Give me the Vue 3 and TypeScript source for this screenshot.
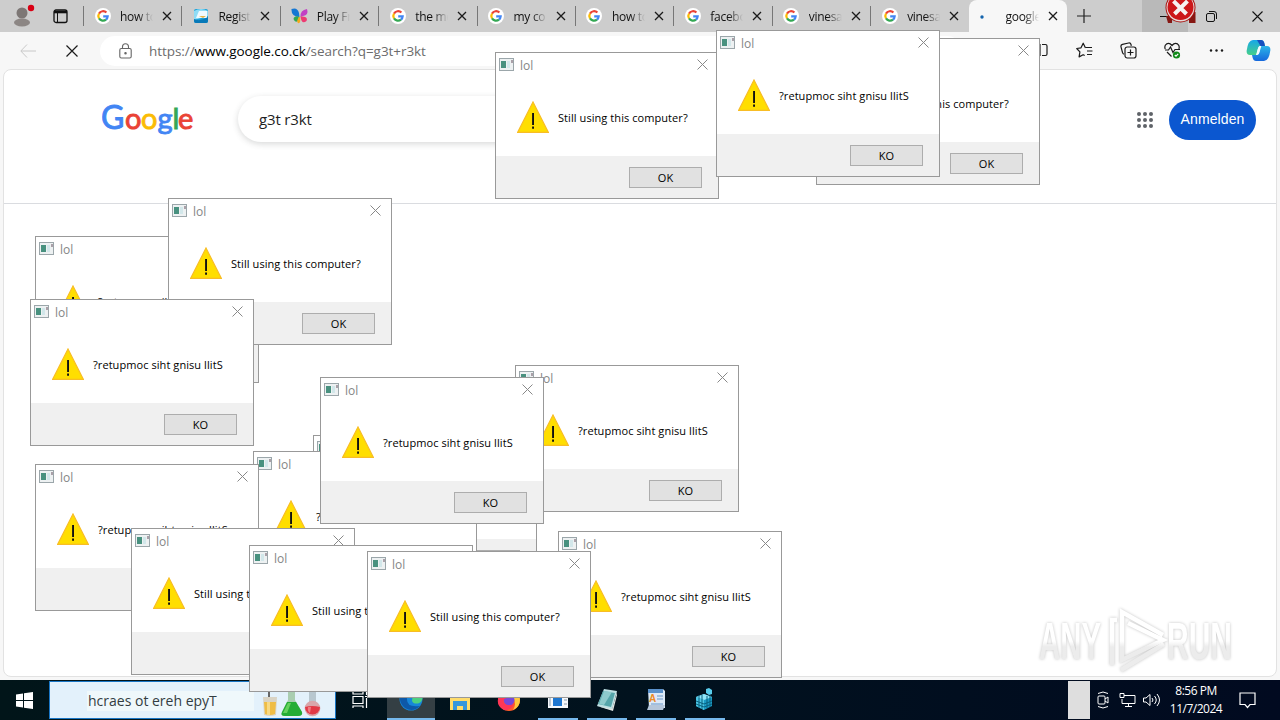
<template>
  <div class="desktop">
    <div class="browser">
      <div class="tab-bar">
        <div class="profile">
          <svg width="28" height="28" viewBox="0 0 28 28">
            <circle cx="13" cy="11" r="5.500" fill="#7d7775" />
            <ellipse cx="13" cy="20.500" rx="8" ry="4" fill="#8c8684" />
            <circle cx="22" cy="6" r="3.200" fill="#d90014" />
          </svg>
        </div>
        <svg class="workspaces" width="15" height="15" viewBox="0 0 15 15" fill="none" stroke="#111">
          <rect x="1" y="1" width="13" height="12.500" rx="2" stroke-width="1.300" />
          <path d="M1 3h13" stroke-width="2.600" />
          <path d="M4.500 3v10" />
        </svg>
        <div v-for="(tab, i) in tabs" :key="i" class="tab" :class="{ active: tab.icon === 'loading' }">
          <span class="favicon">
            <svg v-if="tab.icon === 'google'" width="16" height="16" viewBox="0 0 16 16">
              <circle cx="8" cy="8" r="8" fill="#fff" />
              <g fill="none" stroke-width="2.200">
                <path d="M11.400 4.500A4.700 4.700 0 0 0 4 5.600" stroke="#ea4335" />
                <path d="M4 5.600a4.700 4.700 0 0 0 0 4.800" stroke="#fbbc05" />
                <path d="M4 10.400a4.700 4.700 0 0 0 7 1.200" stroke="#34a853" />
                <path d="M11 11.600a4.600 4.600 0 0 0 1.700-3.300H8.200" stroke="#4285f4" />
              </g>
            </svg>
            <svg v-else-if="tab.icon === 'register'" width="16" height="16" viewBox="0 0 16 16">
              <rect x="1" y="1" width="14" height="14" rx="2" fill="#1ba0d8" />
              <path d="M1 3q7-4 14 0v5L1 12z" fill="#8fdcf5" />
              <path d="M6 3h8v7H3z" fill="#effaff" />
              <path d="M1 11q6 3 14-2v4q0 2-2 2H3q-2 0-2-2z" fill="#0879b8" />
              <path d="M6 8l7 0-3 2z" fill="#e3b44b" />
            </svg>
            <svg v-else-if="tab.icon === 'msn'" width="18" height="16" viewBox="0 0 18 16">
              <path d="M8.500 9Q0 9 .500 1q6-2 7.500 4z" fill="#1577d3" />
              <path d="M8 8.500q-5-1-5.500 2.500 1.500 4 4.500 2z" fill="#33a853" />
              <path d="M9.500 9Q9 2 16 1q2 6-4 7z" fill="#c23fc4" />
              <path d="M9.500 8.500q8-.500 6 4.500-5 4-6-4.500z" fill="#ed3b72" />
              <path d="M8 9q-3 4-1 6 3 1 2-6z" fill="#f8a81b" />
            </svg>
            <svg v-else width="16" height="16" viewBox="0 0 16 16"><circle cx="2" cy="9" r="1.700" fill="#1464ad" /></svg>
          </span>
          <span class="tab-title">{{ tab.title }}</span>
          <svg class="tab-close" width="10" height="10" viewBox="0 0 10 10"><path d="M1 1l8 8M9 1l-8 8" stroke="#1b1b1b" stroke-width="1.300" /></svg>
        </div>
        <svg class="new-tab" width="14" height="14" viewBox="0 0 14 14"><path d="M7 0v14M0 7h14" stroke="#222" stroke-width="1.200" /></svg>
        <div class="window-buttons">
          <span class="win-btn hover"><svg width="11" height="11" viewBox="0 0 11 11"><path d="M0 5.500h11" stroke="#111" /></svg></span>
          <span class="win-btn">
            <svg width="11" height="11" viewBox="0 0 11 11" fill="none" stroke="#111">
              <rect x=".500" y="2.500" width="8" height="8" rx="1.500" />
              <path d="M3 .500h5q2.500 0 2.500 2.500v5" />
            </svg>
          </span>
          <span class="win-btn"><svg width="11" height="11" viewBox="0 0 11 11"><path d="M.500.500l10 10M10.500.500l-10 10" stroke="#111" stroke-width="1.100" /></svg></span>
        </div>
      </div>

      <div class="toolbar">
        <svg class="back" width="16" height="14" viewBox="0 0 16 14" fill="none" stroke="#c8c8c8"><path d="M16 7H1M7 .500L.800 7 7 13.500" /></svg>
        <svg class="stop" width="12" height="12" viewBox="0 0 12 12"><path d="M.500.500l11 11M11.500.500l-11 11" stroke="#1b1b1b" stroke-width="1.200" /></svg>
        <div class="address">
          <svg width="13" height="16" viewBox="0 0 13 16" fill="none" stroke="#666" stroke-width="1.100">
            <rect x=".800" y="5.500" width="11.400" height="9.500" rx="1.500" />
            <path d="M3.500 5.500V3.800a3 3 0 0 1 6 0v1.700" />
            <circle cx="6.500" cy="10.200" r=".700" fill="#555" />
          </svg>
          <span class="url">https://<b>www.google.co.ck</b>/search?q=g3t+r3kt</span>
        </div>
        <div class="tools">
          <svg width="16" height="16" viewBox="0 0 16 16" fill="none" stroke="#1b1b1b" stroke-width="1.200"><path d="M7 2.500H3q-2 0-2 2v7q0 2 2 2h4zM9 2.500h3.500q1.500 0 1.500 1.500v8q0 1.500-1.500 1.500H9" /></svg>
          <svg width="17" height="17" viewBox="0 0 17 17" fill="none" stroke="#1b1b1b" stroke-width="1.200" stroke-linejoin="round"><path d="M9.500 6L7.200 1.200 5 5.800.700 6.500l3.200 3.400-.800 5 4-2.200 1.600.900M10 5.500h6M11 9h5.500M11 12.500h5" /></svg>
          <svg width="17" height="17" viewBox="0 0 17 17" fill="none" stroke="#1b1b1b" stroke-width="1.200"><rect x="5" y="5" width="11" height="11" rx="2.200" /><path d="M10.500 7.500v6M7.500 10.500h6M4 12.200Q2.800 12 2.500 10.500L1 4.800q-.400-2 1.500-2.500L8.600 1q1.900-.400 2.400 1.500l.300 1.300" /></svg>
          <svg width="17" height="17" viewBox="0 0 17 17" fill="none" stroke="#1b1b1b" stroke-width="1.200"><path d="M1.200 7Q0 3.500 2.600 1.900 5.500.500 8 3.500 10.500.500 13.500 1.900 16 3.500 14.900 7M1 8h3.500l2-3 2.500 5.500L11 7.500h5M3 10l4.500 4.500" /><circle cx="12.500" cy="13" r="3.600" fill="#118a19" stroke="none" /><path d="M10.800 13l1.200 1.200 2.200-2.400" stroke="#fff" /></svg>
          <svg width="17" height="17" viewBox="0 0 17 17" fill="#1b1b1b"><circle cx="3" cy="8.500" r="1.200" /><circle cx="8.500" cy="8.500" r="1.200" /><circle cx="14" cy="8.500" r="1.200" /></svg>
        </div>
        <svg class="copilot" width="25" height="23" viewBox="0 0 25 23">
          <defs>
            <linearGradient id="cp-a" x1="0" y1="0" x2="0" y2="1"><stop offset="0" stop-color="#17a7e8" /><stop offset="1" stop-color="#45cf8a" /></linearGradient>
            <linearGradient id="cp-b" x1="0" y1="0" x2="0" y2="1"><stop offset="0" stop-color="#2bb5e8" /><stop offset="1" stop-color="#1668dc" /></linearGradient>
          </defs>
          <path d="M7 1h8q2.500 0 3.300 3l.700 3h-4q-2.500 0-3.200 3L10.500 16H4Q.500 16 .600 12 2 1 7 1z" fill="url(#cp-a)" />
          <path d="M18 22h-8q-2.500 0-3.300-3L6 16h4q2.500 0 3.200-3L14.500 7H21q3.500 0 3.400 4Q23 22 18 22z" fill="url(#cp-b)" />
          <path d="M11 1h4q2.500 0 3.300 3l.700 3h-4.500z" fill="#164fbf" />
          <path d="M13.500 7h1.800l-2 7q-.700 2-2.500 2H10l1.800-6q.700-2.500 1.700-3z" fill="#f3fbff" />
        </svg>
      </div>

      <div class="page">
        <div class="search-head">
          <svg class="logo" width="94" height="36" viewBox="0 0 94 36">
            <text y="26" font-family="Lato, sans-serif" font-size="29" stroke-width=".900"><tspan x="-1" font-size="32" fill="#4285f4" stroke="#4285f4">G</tspan><tspan x="23" fill="#ea4335" stroke="#ea4335">o</tspan><tspan x="39" fill="#fbbc05" stroke="#fbbc05">o</tspan><tspan x="55.500" fill="#4285f4" stroke="#4285f4">g</tspan><tspan x="70.500" fill="#34a853" stroke="#34a853">l</tspan><tspan x="76" fill="#ea4335" stroke="#ea4335">e</tspan></text>
          </svg>
          <div class="search-box">g3t r3kt</div>
          <div class="account">
            <svg width="16" height="16" viewBox="0 0 16 16" fill="#5f6368">
              <circle v-for="n in 9" :key="n" :cx="2 + ((n - 1) % 3) * 6" :cy="2 + Math.floor((n - 1) / 3) * 6" r="2" />
            </svg>
            <span class="sign-in">Anmelden</span>
          </div>
        </div>
      </div>
    </div>

    <svg class="watermark" width="204" height="76" viewBox="0 0 204 76">
      <defs>
        <linearGradient id="wm" x1="0" y1="0" x2="0" y2="1"><stop offset=".500" stop-color="#fff" /><stop offset=".600" stop-color="#ececec" /></linearGradient>
        <linearGradient id="wm-mark" gradientUnits="userSpaceOnUse" x1="0" y1="8" x2="0" y2="68"><stop offset=".500" stop-color="#fff" /><stop offset=".600" stop-color="#ececec" /></linearGradient>
      </defs>
      <g fill="url(#wm)" font-family="Liberation Sans, sans-serif" font-size="52" font-weight="700">
        <text x="4" y="56" textLength="62" lengthAdjust="spacingAndGlyphs">ANY</text>
        <text x="132" y="56" textLength="65" lengthAdjust="spacingAndGlyphs">RUN</text>
      </g>
      <g fill="none" stroke="url(#wm-mark)" stroke-width="4.500">
        <path d="M82 17h-5v45" />
        <path d="M128 32L87 9v48l41-20L93 20" />
        <path d="M129 41L86 67" />
      </g>
    </svg>

    <div class="taskbar">
      <span class="start">
        <svg width="17" height="17" viewBox="0 0 17 17" fill="#fff"><path d="M0 2.400l7-1v6.700H0zM8 1.200L17 0v8.100H8zM0 9h7v6.600l-7-1zM8 9h9v8l-9-1.200z" /></svg>
      </span>
      <div class="search">
        <span class="search-text">hcraes ot ereh epyT</span>
        <svg width="70" height="36" viewBox="0 0 70 36">
          <path d="M3 15h14l-1 18q-6 2-12 0z" fill="#d9d3c4" /><path d="M4 20h12l-1 12q-5 2-10 0z" fill="#efbd45" /><path d="M7 20h3v13H7z" fill="#f8d983" /><path d="M9 7v8" stroke="#666" stroke-width="2" />
          <path d="M28 8h7v10l7 12q1 4-4 4H25q-5 0-3-4l6-12z" fill="#a9cdb0" /><path d="M27 20h9l6 10q1 4-4 4H25q-5 0-3-4z" fill="#25ad35" /><path d="M28 21h3l-4 10h-4z" fill="#65d15e" />
          <path d="M49 7h7v13h-7z" fill="#b8c7cf" /><circle cx="52.500" cy="26.500" r="7.800" fill="#d9a6ab" /><path d="M45 25q7-2 15 0a7.500 7.500 0 0 1-15 0" fill="#e23946" /><path d="M48 25h3l-1 6q-3-2-2-6" fill="#f17c83" />
        </svg>
      </div>
      <span class="task-view">
        <svg width="17" height="18" viewBox="0 0 17 18" fill="none" stroke="#fff" stroke-width="1.200"><path d="M1 1v2h10V1M1 5.500h10v7H1zM1 17v-2h10v2M14.500 0v4M14.500 7v10M13 5.500h4" /></svg>
      </span>
      <span v-for="app in apps" :key="app" class="app" :class="app">
        <svg width="24" height="24" viewBox="0 0 24 24">
          <g v-if="app === 'edge'"><circle cx="12" cy="12" r="11.500" fill="#1686d9" /><path d="M14 6q6-4 9.500 3 .500 6-4.500 7.500-5 .500-6-2.500z" fill="#4cd082" /><path d="M8 11q-1 10 13 8-7 7-15 2-6-5-5-12 5-3 7 2z" fill="#0d58a8" /></g>
          <g v-else-if="app === 'files'"><path d="M2 3h8l2 2h10v16H2z" fill="#f2b824" /><path d="M2 8h20v14H2z" fill="#ffdc6b" /><path d="M5 13h14v9h-4v-4H9v4H5z" fill="#3597dd" /></g>
          <g v-else-if="app === 'firefox'"><circle cx="12" cy="12" r="11" fill="#ff5b29" /><path d="M14 1q9 4 9 11 0 7-7 10 4-6 0-13z" fill="#ffc83c" /><circle cx="12" cy="12" r="5.500" fill="#7848d8" /><path d="M2 7q5-2 8 3-5 1-3 5 4 4 10 1-3 7-10 6-9-4-5-15z" fill="#ff3656" /></g>
          <g v-else-if="app === 'program'"><path d="M2 2h20v19H2z" fill="#f5f8fb" /><path d="M2 2h20v4H2z" fill="#8fa8bc" /><path d="M7 8h9v11H7z" fill="#1e77d0" /><path d="M4 8v11M18 9h3M18 13h3M18 17h3" stroke="#8a99a8" /></g>
          <g v-else-if="app === 'notepad'"><path d="M9 2l13 2-5 19-15-4z" fill="#bfe1e4" /><path d="M8 4l12 2-4 14-13-3z" fill="#55a5aa" /><path d="M9 4l8 1-8 13-5-1z" fill="#8ecacc" /><path d="M2 19l15 3 5-17v3l-4 16z" fill="#e2e6e4" /></g>
          <g v-else-if="app === 'wordpad'"><path d="M4 2h15l2 2v17H5z" fill="#dce9f7" /><path d="M4 2h15v4H4z" fill="#5a91cb" /><path d="M5 18h16l-2 5H3z" fill="#b5c6da" /><text x="5" y="15" font-family="Liberation Sans, sans-serif" font-size="10" font-weight="700" fill="#ed8a25">A</text><path d="M13 9h6M13 12h6M7 17h12" stroke="#6896c7" /></g>
          <g v-else><path d="M3 10l8-3 8 3v9l-8 4-8-4z" fill="#1b9ac4" /><path d="M3 10l8 3 8-3-8-3z" fill="#91e6fa" /><path d="M11 13v10l-8-4v-9z" fill="#4cc6e4" /><path d="M6 8v13M9 8v14M14 9v12M17 8v12M3 14l8 3 8-3M3 17l8 3 8-3" stroke="#08607f" fill="none" /><path d="M13 2l3-1 3 2v4l-3 1-3-2z" fill="#58ccec" /></g>
        </svg>
      </span>
      <span class="tray-gap"></span>
      <div class="tray">
        <svg width="12" height="18" viewBox="0 0 12 18" fill="none" stroke="#fff"><rect x="1" y="5" width="7" height="8" rx="1" /><path d="M8 8l3-2v6l-3-2M1 2.500q5-3 10 0M1 15.500q5 3 10 0" /></svg>
        <svg width="17" height="16" viewBox="0 0 17 16" fill="none" stroke="#fff"><path d="M5 3.500h11v8H3V7M9.500 11.500v3M6 14.500h7M1 1.500h4v4H1z" /></svg>
        <svg width="17" height="14" viewBox="0 0 17 14" fill="none" stroke="#fff"><path d="M.500 5v4H3l4 3.500v-11L3 5zM9 5q2 2 0 4M11.500 3q3.500 4 0 8M14 1q5 6 0 12" /></svg>
      </div>
      <div class="clock"><span>8:56 PM</span><span>11/7/2024</span></div>
      <svg class="notice" width="17" height="17" viewBox="0 0 17 17" fill="none" stroke="#fff" stroke-width="1.200"><path d="M1 1h15v11.500h-5L8.500 15.500 6 12.500H1z" /></svg>
    </div>

    <!-- message boxes, listed from bottom to top -->
    <div v-for="(box, i) in boxes" :key="'box' + i" class="msgbox" :style="{ left: box.x + 'px', top: box.y + 'px' }">
      <div class="msg-title">
        <svg width="15" height="13" viewBox="0 0 15 13">
          <rect x=".500" y=".500" width="14" height="12" fill="#edf1f2" stroke="#9ba6aa" />
          <rect x="2" y="3" width="5" height="7" fill="#48917f" />
          <path d="M8 3h3v7H8z" fill="#d2e7ea" /><path d="M12 2h2v3h-2z" fill="#aaa0a8" />
        </svg>
        <span>lol</span>
        <svg class="msg-close" width="11" height="11" viewBox="0 0 11 11"><path d="M.500.500l10 10M10.500.500l-10 10" stroke="#888" /></svg>
      </div>
      <div class="msg-body">
        <svg width="32" height="32" viewBox="0 0 32 32">
          <path d="M16 1L31.300 31.300H.700z" fill="#ffde00" stroke="#f8bd25" stroke-width="1.200" />
          <path d="M15.100 12h1.900v12h-1.900zM15.100 25.500h1.900v2.200h-1.900z" fill="#111" />
        </svg>
        <span>{{ box.flipped ? '?retupmoc siht gnisu llitS' : 'Still using this computer?' }}</span>
      </div>
      <div class="msg-foot"><button>{{ box.flipped ? 'KO' : 'OK' }}</button></div>
    </div>

    <svg class="error-mark" width="31" height="24" viewBox="0 0 31 24">
      <path d="M1 16h6v7H3zM24 12h6.500v11H24z" fill="#861713" />
      <circle cx="15.500" cy="7.500" r="15" fill="#a8100d" />
      <circle cx="15.500" cy="7.500" r="14" fill="#e6dcdb" />
      <circle cx="15.500" cy="7" r="13" fill="#cc1719" />
      <path d="M8.500 1l13 13M22.500 1l-13 13" stroke="#f6f2f0" stroke-width="4" />
    </svg>
  </div>
</template>

<script setup lang="ts">

interface Tab {
  title: string
  icon: 'google' | 'register' | 'msn' | 'loading'
}

interface Box {
  x: number
  y: number
  flipped: boolean
}

const tabs: Tab[] = [
  { title: 'how to', icon: 'google' },
  { title: 'Registr', icon: 'register' },
  { title: 'Play Fr', icon: 'msn' },
  { title: 'the me', icon: 'google' },
  { title: 'my co', icon: 'google' },
  { title: 'how to', icon: 'google' },
  { title: 'facebo', icon: 'google' },
  { title: 'vinesa', icon: 'google' },
  { title: 'vinesa', icon: 'google' },
  { title: 'google', icon: 'loading' },
]

const apps = ['edge', 'files', 'firefox', 'program', 'notepad', 'wordpad', 'regedit']

const boxes: Box[] = [
  { x: 816, y: 38, flipped: false },
  { x: 495, y: 52, flipped: false },
  { x: 716, y: 30, flipped: true },
  { x: 35, y: 236, flipped: true },
  { x: 168, y: 198, flipped: false },
  { x: 30, y: 299, flipped: true },
  { x: 313, y: 435, flipped: true },
  { x: 515, y: 365, flipped: true },
  { x: 253, y: 451, flipped: true },
  { x: 320, y: 377, flipped: true },
  { x: 35, y: 464, flipped: true },
  { x: 131, y: 528, flipped: false },
  { x: 249, y: 545, flipped: false },
  { x: 558, y: 531, flipped: true },
  { x: 367, y: 551, flipped: false },
]

</script>

<style>
body {
  margin: 0;
  overflow: hidden;
}
</style>

<style scoped>
.desktop {
  position: relative;
  width: 1280px;
  height: 720px;
  overflow: hidden;
  display: flex;
  flex-direction: column;
  font-family: "Open Sans", "Noto Sans", sans-serif;
}

svg {
  display: block;
  flex: none;
}

.browser {
  height: 680px;
  background: #f7f7f7;
}

.tab-bar {
  height: 32px;
  display: flex;
  align-items: center;
  background: #cdcdcd;
}

.profile {
  width: 53px;
  padding-left: 9px;
  box-sizing: border-box;
}

.workspaces {
  margin-right: 15px;
}

.tab {
  width: 98.400px;
  height: 32px;
  box-sizing: border-box;
  flex: none;
  display: flex;
  align-items: center;
  padding-left: 11.500px;
  background: linear-gradient(#777, #777) 0 6px / 1px 20px no-repeat;
}

.tab.active {
  background: #f7f7f7;
  border-radius: 8px 8px 0 0;
}

.favicon {
  width: 25.500px;
}

.tab-title {
  width: 33px;
  overflow: hidden;
  white-space: nowrap;
  font-size: 12px;
  letter-spacing: -.300px;
  color: #111;
  mask-image: linear-gradient(to right, #000 55%, transparent);
}

.tab-close {
  margin-left: 9px;
}

.new-tab {
  margin-left: 10px;
}

.window-buttons {
  margin-left: auto;
  display: flex;
  height: 32px;
}

.win-btn {
  width: 46px;
  display: flex;
  align-items: center;
  justify-content: center;
}

.win-btn.hover {
  background: #b9b9b9;
}

.toolbar {
  height: 37px;
  display: flex;
  align-items: center;
  padding: 0 9px 0 20px;
}

.stop {
  margin-left: 30px;
}

.address {
  width: 862px;
  height: 30px;
  margin-left: 22px;
  padding-left: 19px;
  box-sizing: border-box;
  display: flex;
  align-items: center;
  background: #fff;
  border-radius: 15px;
}

.url {
  margin-left: 17px;
  font-size: 13.500px;
  letter-spacing: -.060px;
  color: #6c6c6c;
}

.url b {
  font-weight: 400;
  color: #000;
}

.tools {
  margin-left: auto;
  display: flex;
  gap: 27px;
}

.copilot {
  margin-left: 21px;
}

.page {
  margin: 0 3px;
  height: 608px;
  box-sizing: border-box;
  background: #fff;
  border: 1px solid #e2e2e2;
  border-radius: 8px;
}

.search-head {
  height: 134px;
  box-sizing: border-box;
  padding: 26px 20px 0 98px;
  display: flex;
  align-items: flex-start;
  border-bottom: 1px solid #dadce0;
}

.logo {
  margin-top: 7px;
}

.search-box {
  width: 690px;
  height: 46px;
  margin-left: 42px;
  padding-left: 21px;
  box-sizing: border-box;
  border-radius: 23px;
  box-shadow: 0 2px 6px rgba(60, 64, 67, .2);
  font-size: 15px;
  letter-spacing: -.150px;
  line-height: 47px;
  color: #1f1f1f;
}

.account {
  margin: 4px 0 0 auto;
  display: flex;
  align-items: center;
  gap: 16px;
}

.sign-in {
  width: 87px;
  height: 40px;
  line-height: 38px;
  border-radius: 20px;
  background: #0b57d0;
  color: #fff;
  font-family: "Liberation Sans", sans-serif;
  font-size: 14px;
  letter-spacing: .1px;
  text-align: center;
}

.watermark {
  position: absolute;
  left: 1035px;
  top: 603px;
  filter: drop-shadow(0 0 1.500px rgba(0, 0, 0, .240));
}

.taskbar {
  height: 40px;
  display: flex;
  align-items: stretch;
  background: linear-gradient(90deg, #011519, #01121e 50%, #010a20);
}

.start {
  width: 49px;
  display: flex;
  align-items: center;
  justify-content: center;
}

.search {
  width: 287px;
  height: 38px;
  margin-top: 1px;
  padding: 0 5px 0 38px;
  box-sizing: border-box;
  display: flex;
  align-items: center;
  justify-content: space-between;
  border: 1px solid #1976c5;
  background:
    linear-gradient(#eff8fb, #eff8fb) 37px 9px / 167px 20px no-repeat,
    #e3f1fb;
}

.search-text {
  font-size: 14px;
  color: #333d42;
}

.task-view {
  width: 51px;
  display: flex;
  align-items: center;
  padding-left: 16px;
  box-sizing: border-box;
}

.app {
  width: 40px;
  margin-right: 9px;
  box-sizing: border-box;
  display: flex;
  align-items: center;
  justify-content: center;
}

.app.edge {
  width: 48px;
  margin-right: 5px;
  background: #343f44;
  border-bottom: 2px solid #76b9ed;
}

.program,
.notepad,
.wordpad,
.regedit {
  border-bottom: 2px solid #76b9ed;
}

.tray-gap {
  width: 22px;
  margin: 1px 0 1px auto;
  background: #dedede;
}

.tray {
  margin-left: 7px;
  display: flex;
  align-items: center;
  gap: 10px;
}

.tray svg:last-child {
  margin-left: -3px;
}

.clock {
  width: 72px;
  display: flex;
  flex-direction: column;
  align-items: center;
  justify-content: center;
  font-size: 12px;
  line-height: 18px;
  letter-spacing: -.500px;
  color: #fff;
}

.notice {
  margin: 12px 24px 0 7px;
}

.msgbox {
  position: absolute;
  width: 224px;
  height: 147px;
  box-sizing: border-box;
  display: flex;
  flex-direction: column;
  background: #fff;
  border: 1px solid #999;
}

.msg-title {
  height: 23px;
  padding: 0 10px 0 3px;
  display: flex;
  align-items: center;
  font-size: 12px;
  color: #868686;
}

.msg-title span {
  margin: 2px 0 0 6px;
}

.msg-close {
  margin-left: auto;
}

.msg-body {
  height: 80px;
  padding: 0 0 0 21px;
  display: flex;
  align-items: center;
  gap: 9px;
  font-size: 11px;
  letter-spacing: .070px;
  color: #000;
  white-space: nowrap;
}

.msg-body svg {
  margin-top: 2px;
}

.msg-body span {
  margin-top: 3px;
}

.msg-foot {
  flex: 1;
  padding: 11px 16px 0 0;
  display: flex;
  align-items: flex-start;
  justify-content: flex-end;
  background: #f0f0f0;
}

.msg-foot button {
  width: 73px;
  height: 21px;
  padding: 0;
  border: 1px solid #adadad;
  background: #e1e1e1;
  font-family: inherit;
  font-size: 11px;
  line-height: 19px;
  color: #000;
}

.error-mark {
  position: absolute;
  left: 1165px;
  top: 0;
}
</style>
